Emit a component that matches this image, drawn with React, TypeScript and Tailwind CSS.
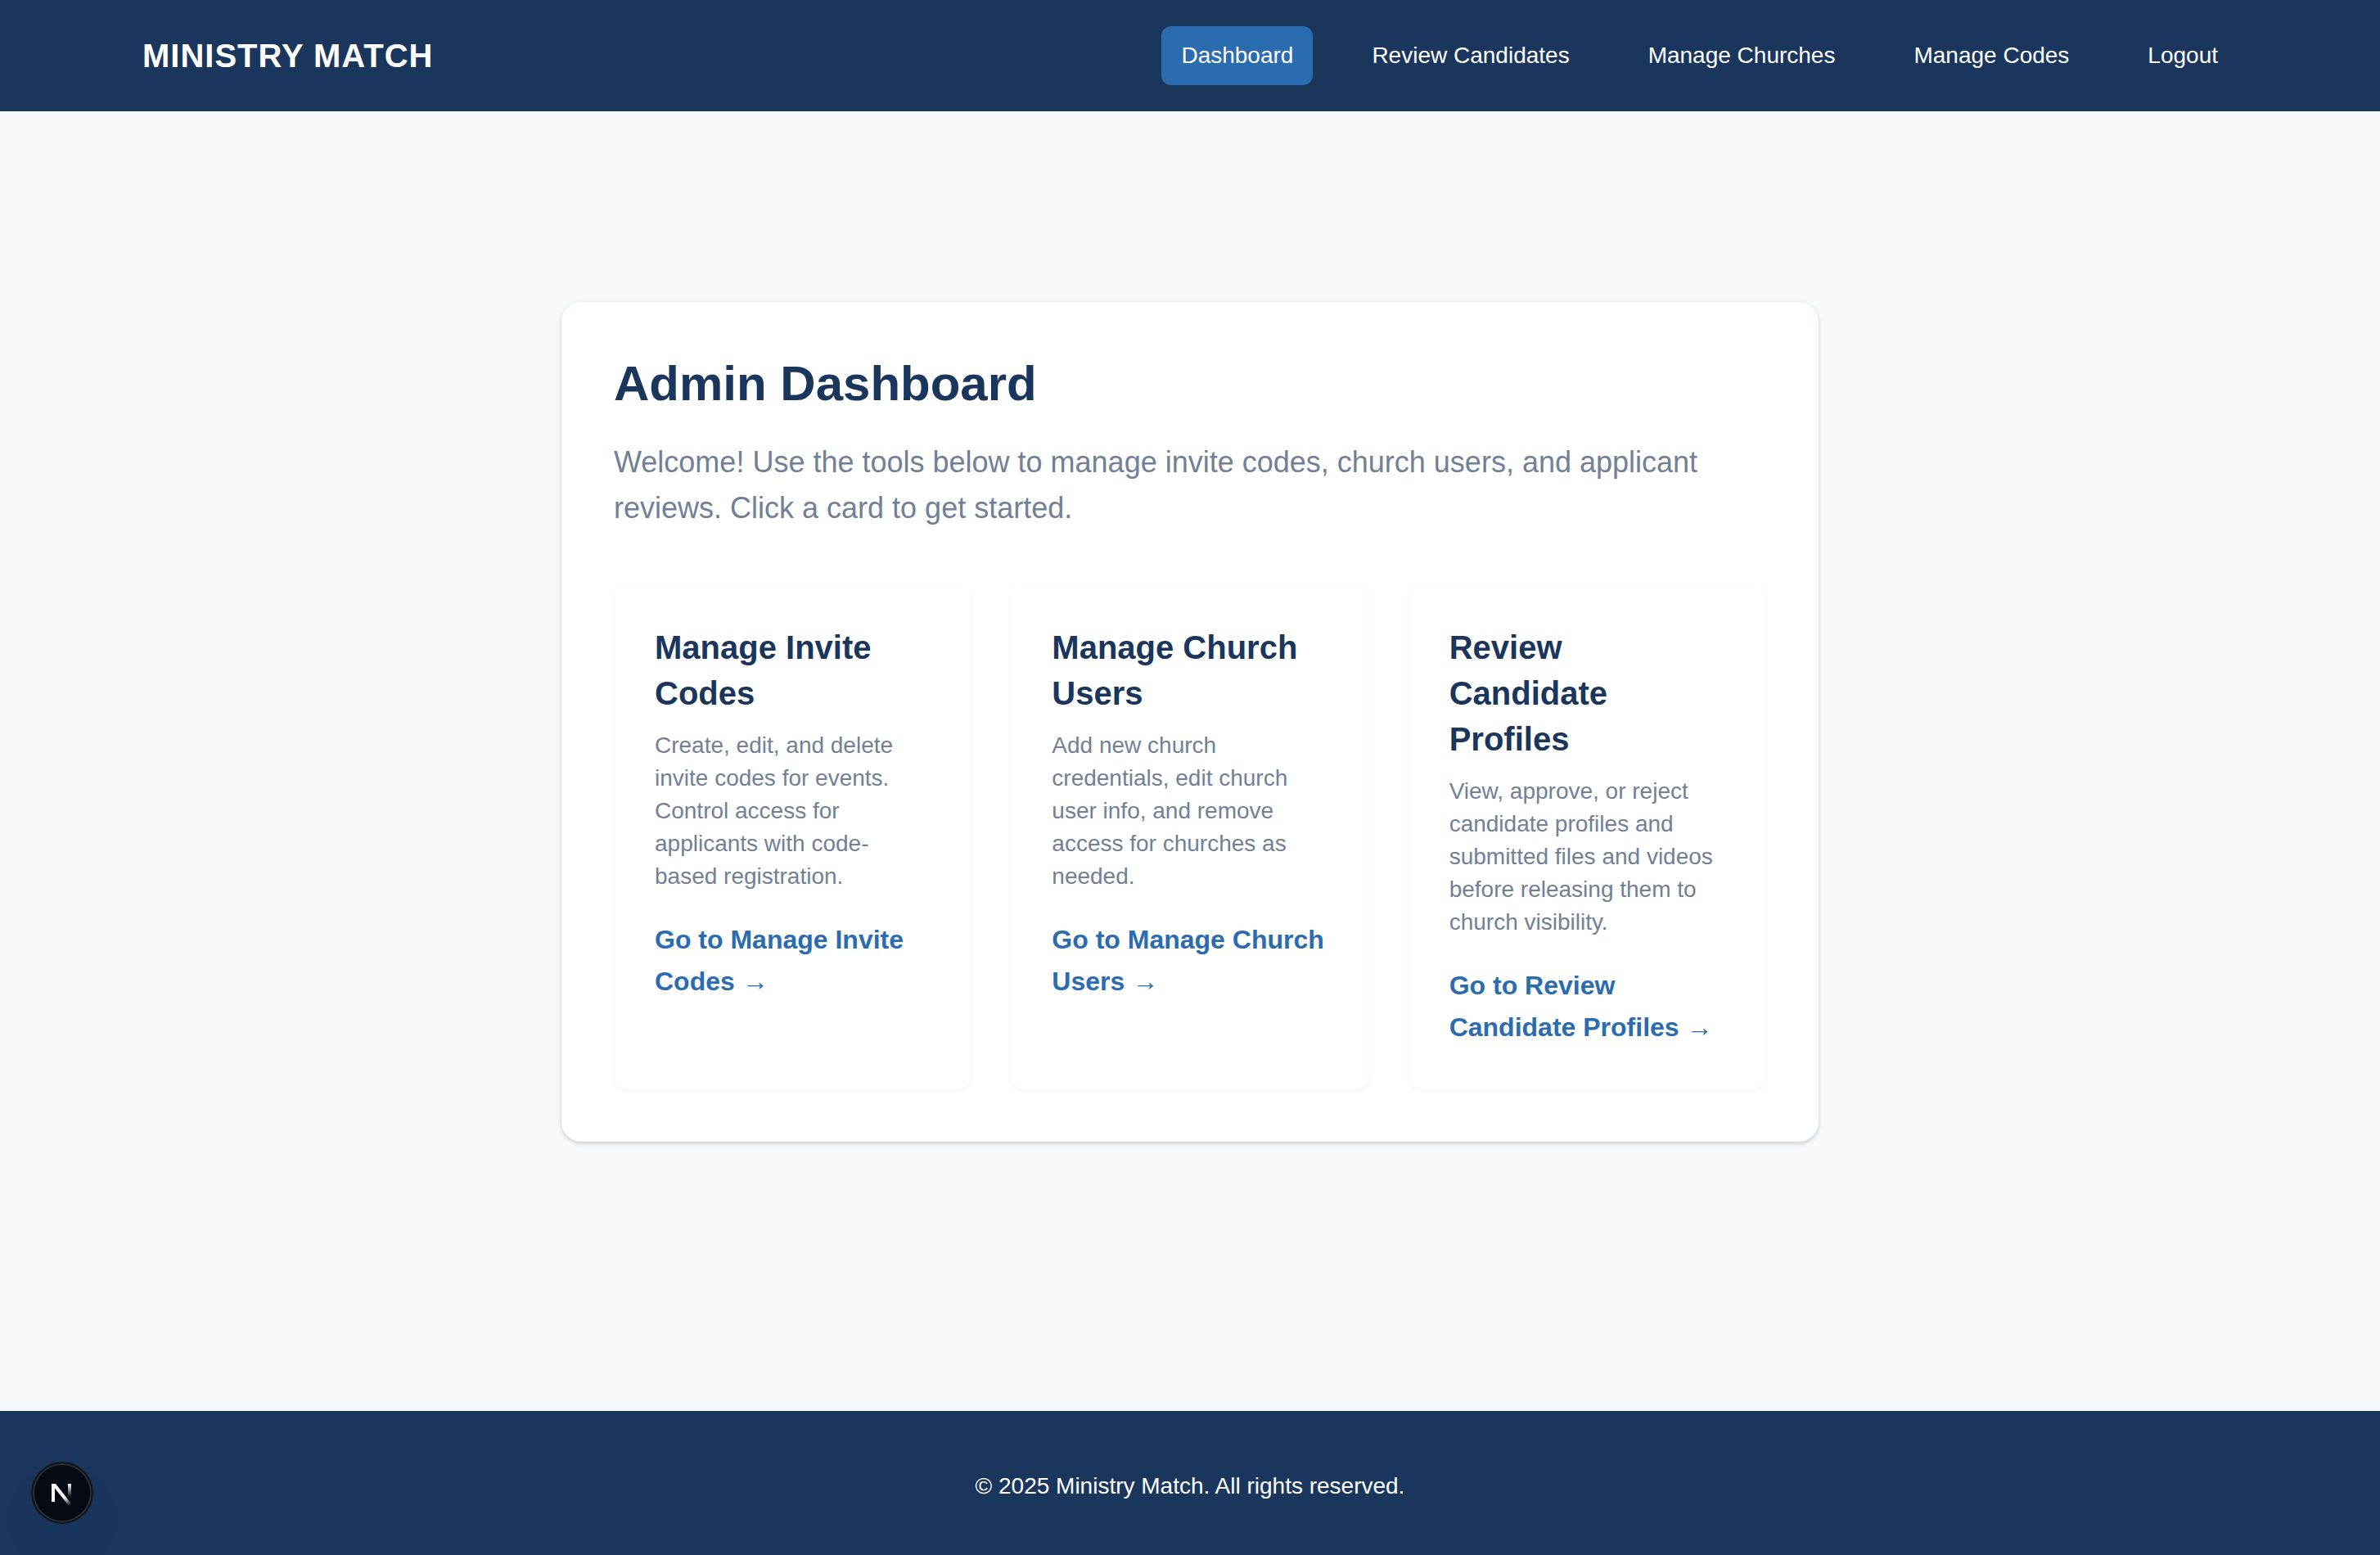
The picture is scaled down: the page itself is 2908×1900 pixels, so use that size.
const navItems = [
  { label: "Dashboard", active: true },
  { label: "Review Candidates", active: false },
  { label: "Manage Churches", active: false },
  { label: "Manage Codes", active: false },
];

const cards = [
  {
    title: "Manage Invite Codes",
    text: "Create, edit, and delete invite codes for events. Control access for applicants with code-based registration.",
    link: "Go to Manage Invite Codes →",
  },
  {
    title: "Manage Church Users",
    text: "Add new church credentials, edit church user info, and remove access for churches as needed.",
    link: "Go to Manage Church Users →",
  },
  {
    title: "Review Candidate Profiles",
    text: "View, approve, or reject candidate profiles and submitted files and videos before releasing them to church visibility.",
    link: "Go to Review Candidate Profiles →",
  },
];

function NextMark() {
  return (
    <svg viewBox="0 0 40 40" className="size-10" fill="none" aria-hidden="true">
      <defs>
        <linearGradient id="diag" x1="22" y1="20" x2="32" y2="34" gradientUnits="userSpaceOnUse">
          <stop offset="0.3" stopColor="white" />
          <stop offset="1" stopColor="white" stopOpacity="0" />
        </linearGradient>
        <linearGradient id="stem" x1="0" y1="9" x2="0" y2="25" gradientUnits="userSpaceOnUse">
          <stop stopColor="white" />
          <stop offset="1" stopColor="white" stopOpacity="0" />
        </linearGradient>
      </defs>
      <path d="M7 31V9H11V31Z" fill="white" />
      <path d="M7 9H12L32 34.5L29 37L9 12Z" fill="url(#diag)" />
      <path d="M27 9H31V25H27Z" fill="url(#stem)" />
    </svg>
  );
}

export default function App() {
  return (
    <div className="flex min-h-screen flex-col bg-[#f7fafc] font-['Liberation_Sans',Arial,sans-serif]">
      <header className="bg-[#1a365d] text-white">
        <div className="mx-auto flex max-w-[2560px] items-center justify-between py-8">
          <a href="#" className="text-[40px] leading-14 font-bold tracking-wide">
            MINISTRY MATCH
          </a>
          <nav className="flex items-center gap-12 text-[28px] leading-10">
            {navItems.map((item) => (
              <a
                key={item.label}
                href="#"
                aria-current={item.active ? "page" : undefined}
                className={item.active ? "rounded-xl bg-[#2b6cb0] px-6 py-4" : "rounded-xl px-6 py-4"}
              >
                {item.label}
              </a>
            ))}
            <button type="button" className="rounded-xl px-6 py-4">
              Logout
            </button>
          </nav>
        </div>
      </header>

      <main className="flex flex-1 flex-col items-center justify-center pb-24">
        <section className="w-full max-w-[1536px] rounded-3xl bg-white p-16 shadow-[0_2px_6px_rgba(0,0,0,0.1),0_2px_4px_rgba(0,0,0,0.1)]">
          <h1 className="text-[60px] leading-[72px] font-bold text-[#1a365d]">Admin Dashboard</h1>
          <p className="mt-8 text-[36px] leading-14 text-[#718096]">
            Welcome! Use the tools below to manage invite codes, church users, and applicant reviews. Click a card to
            get started.
          </p>
          <div className="mt-16 grid grid-cols-3 gap-12">
            {cards.map((card) => (
              <article
                key={card.title}
                className="rounded-2xl border-2 border-[#fdfdfd] bg-white p-12 shadow-[0_2px_4px_rgba(0,0,0,0.05)]"
              >
                <h2 className="text-[40px] leading-14 font-bold text-[#1a365d]">{card.title}</h2>
                <p className="mt-4 text-[28px] leading-10 text-[#718096]">{card.text}</p>
                <a href="#" className="mt-8 block text-[32px] leading-[51px] font-bold text-[#2b6cb0]">
                  {card.link}
                </a>
              </article>
            ))}
          </div>
        </section>
      </main>

      <footer className="bg-[#1a365d] pt-[72px] pb-16 text-center text-[28px] leading-10 text-white">
        <p>© 2025 Ministry Match. All rights reserved.</p>
      </footer>

      <button
        type="button"
        aria-label="Open Next.js Dev Tools"
        className="fixed bottom-[38px] left-[38px] flex size-[76px] items-center justify-center rounded-full border-2 border-[#171717] bg-[#050a14] shadow-[inset_0_0_0_2px_#2a2f38,0_32px_64px_-16px_rgba(0,0,0,0.1)]"
      >
        <NextMark />
      </button>
    </div>
  );
}
